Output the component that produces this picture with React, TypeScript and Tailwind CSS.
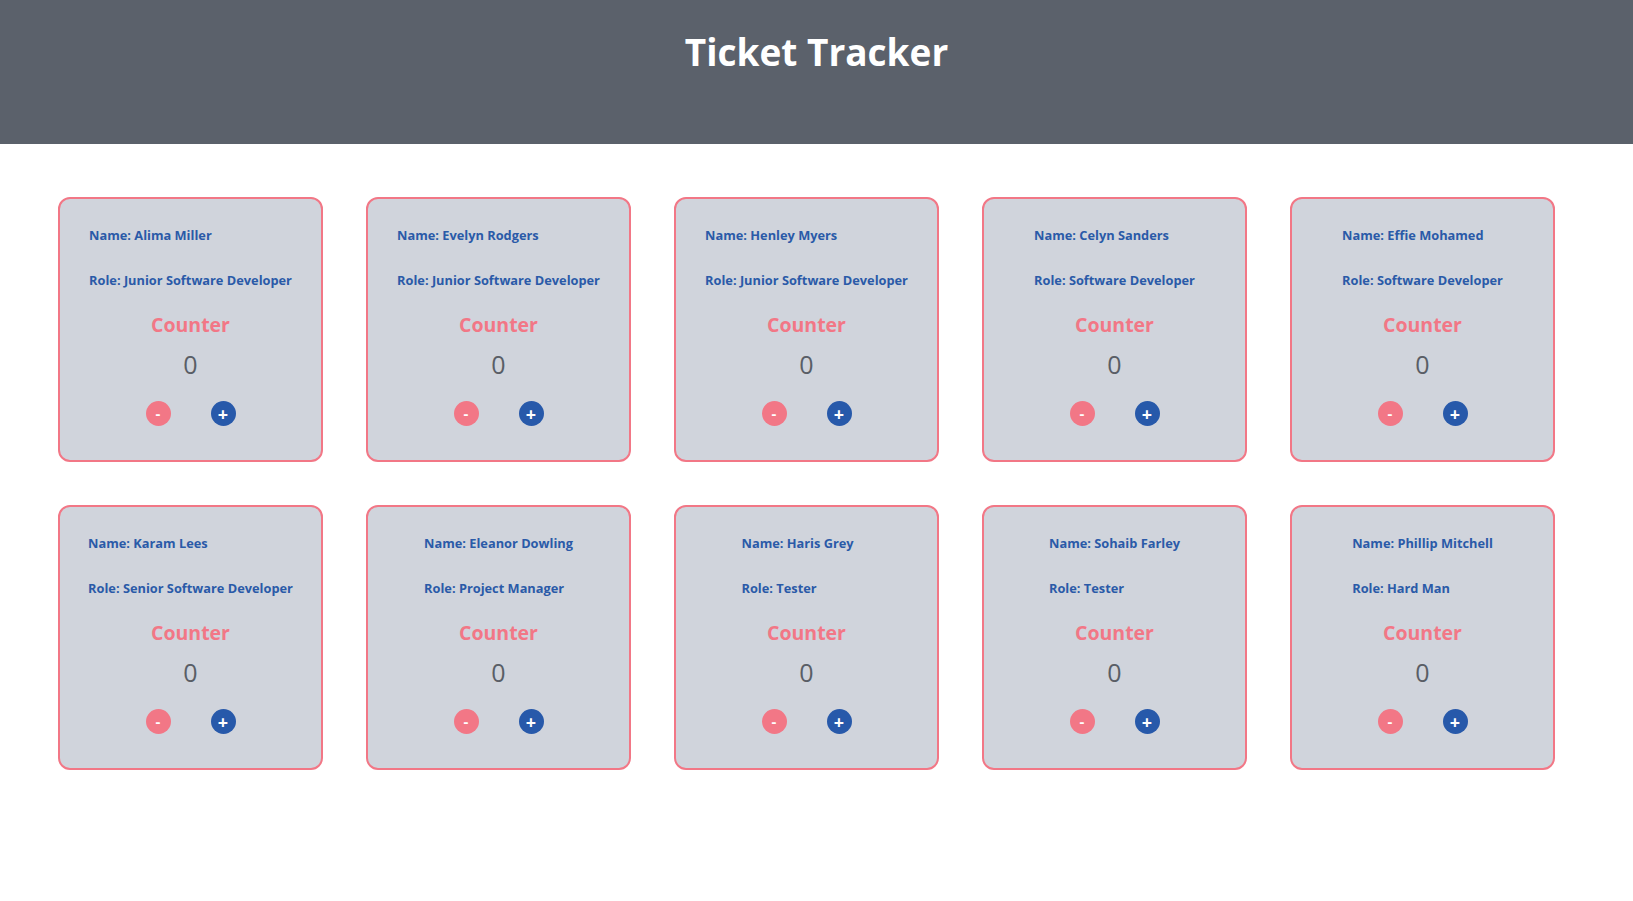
import React, { useState } from 'react';

interface Employee {
  name: string;
  role: string;
}

const employees: Employee[] = [
  { name: 'Alima Miller', role: 'Junior Software Developer' },
  { name: 'Evelyn Rodgers', role: 'Junior Software Developer' },
  { name: 'Henley Myers', role: 'Junior Software Developer' },
  { name: 'Celyn Sanders', role: 'Software Developer' },
  { name: 'Effie Mohamed', role: 'Software Developer' },
  { name: 'Karam Lees', role: 'Senior Software Developer' },
  { name: 'Eleanor Dowling', role: 'Project Manager' },
  { name: 'Haris Grey', role: 'Tester' },
  { name: 'Sohaib Farley', role: 'Tester' },
  { name: 'Phillip Mitchell', role: 'Hard Man' },
];

function EmployeeCard({ employee }: { employee: Employee }) {
  const [count, setCount] = useState(0);

  return (
    <div className="w-[265px] h-[265px] rounded-[12px] border-2 border-[#f27786] bg-[#d0d4dc] flex flex-col items-center pt-[27px]">
      <div className="min-w-[130px] text-left text-[12.8px] leading-[18px] font-bold text-[#2a5aa8]">
        <p>Name: {employee.name}</p>
        <p className="mt-[27px]">Role: {employee.role}</p>
      </div>
      <h3 className="mt-[22px] text-[19.5px] leading-[28px] font-bold text-[#f27786]">Counter</h3>
      <p className="mt-[9px] text-[25px] leading-[32px] text-[#595e66]">{count}</p>
      <div className="mt-[21px] flex gap-[40px]">
        <button
          onClick={() => setCount(c => Math.max(0, c - 1))}
          className="w-[25px] h-[25px] rounded-full bg-[#f27786] text-white text-[15px] font-bold leading-none flex items-center justify-center"
        >
          -
        </button>
        <button
          onClick={() => setCount(c => c + 1)}
          className="w-[25px] h-[25px] rounded-full bg-[#2759aa] text-white text-[18px] font-bold leading-none flex items-center justify-center"
        >
          +
        </button>
      </div>
    </div>
  );
}

export default function App() {
  return (
    <div className="min-h-screen bg-white font-['Open_Sans',sans-serif]">
      <header className="h-[144px] bg-[#5b616b] flex justify-center pt-[27px]">
        <h1 className="text-[37px] leading-[50px] font-bold text-white">Ticket Tracker</h1>
      </header>
      <main className="pl-[58px] pt-[53px]">
        <div className="grid grid-cols-[repeat(5,265px)] gap-x-[43px] gap-y-[43px]">
          {employees.map(e => (
            <EmployeeCard key={e.name} employee={e} />
          ))}
        </div>
      </main>
    </div>
  );
}
